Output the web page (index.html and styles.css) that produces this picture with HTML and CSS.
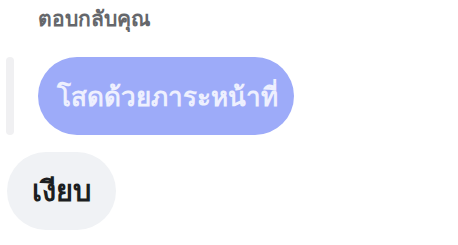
FILE: index.html
```html
<!DOCTYPE html>
<html lang="th">
<head>
    <meta charset="UTF-8" />
    <title>ตอบกลับ</title>
    <link rel="stylesheet" href="styles.css">
</head>
<body>
    <div class="thread">
        <div class="reply-label">ตอบกลับคุณ</div>
        <div class="reply-row">
            <div class="reply-bar"></div>
            <div class="bubble quoted">โสดด้วยภาระหน้าที่</div>
        </div>
        <div class="bubble incoming">เงียบ</div>
    </div>
</body>
</html>
```

FILE: styles.css
```css
body {
    margin: 0;
    background: #ffffff;
    font-family: 'Noto Sans', sans-serif;
}

.thread {
    display: flex;
    flex-direction: column;
    align-items: flex-start;
    padding-top: 2px;
}

.reply-label {
    margin-left: 38px;
    font-size: 21px;
    font-weight: 700;
    color: #65676b;
    line-height: 32px;
}

.reply-row {
    display: flex;
    gap: 24px;
    margin-top: 23px;
    margin-left: 6px;
}

.reply-bar {
    width: 8px;
    border-radius: 4px;
    background: #f0f0f2;
}

.bubble {
    height: 78px;
    box-sizing: border-box;
    display: flex;
    align-items: center;
    border-radius: 39px;
}

.quoted {
    background: #9dabf9;
    color: #eef0fe;
    font-size: 26px;
    font-weight: 700;
    padding: 0 16px 0 19px;
}

.incoming {
    margin-top: 17px;
    margin-left: 7px;
    background: #f0f2f5;
    color: #1c1e21;
    font-size: 29px;
    font-weight: 700;
    padding: 0 25px;
}
```
